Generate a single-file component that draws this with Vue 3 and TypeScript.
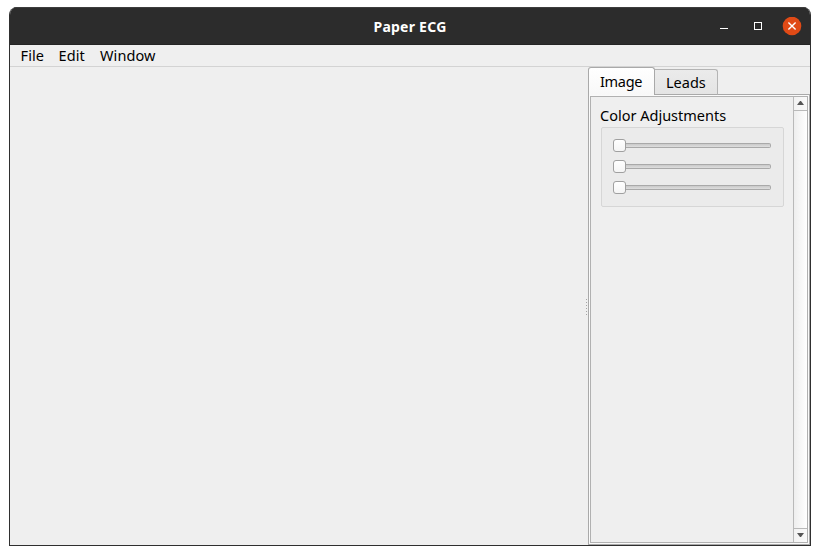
<script setup lang="ts">
import { ref } from 'vue'

const menus = ['File', 'Edit', 'Window']
const tabs = ['Image', 'Leads']
const active = ref('Image')
const sliders = ref([0, 0, 0])
</script>

<template>
  <div class="desktop">
    <div class="window">
      <header class="titlebar">
        <span class="title">Paper ECG</span>
        <div class="controls">
          <svg width="90" height="20" viewBox="0 0 90 20">
            <path d="M8 11.5h8" stroke="#fff" stroke-width="1" />
            <rect x="42.5" y="5.5" width="7" height="7" fill="none" stroke="#fff" />
            <circle cx="80" cy="9" r="9.3" fill="#e04a16" />
            <path d="M76.4 5.4l7.2 7.2M83.6 5.4l-7.2 7.2" stroke="#fff" stroke-width="1.4" />
          </svg>
        </div>
      </header>
      <nav class="menubar">
        <span v-for="m in menus" :key="m" :class="['menu', 'menu-' + m.toLowerCase()]">{{ m }}</span>
      </nav>
      <main class="body">
        <section class="canvas"></section>
        <div class="splitter"><i v-for="n in 6" :key="n"></i></div>
        <aside class="side">
          <div class="tabs">
            <div
              v-for="t in tabs"
              :key="t"
              :class="['tab', 'tab-' + t.toLowerCase(), { active: active === t }]"
              @click="active = t"
            ><span>{{ t }}</span></div>
            <div class="tabfill"></div>
          </div>
          <div class="pane">
            <div class="frame">
              <div class="content">
                <div class="heading"><span>Color Adjustments</span></div>
                <div class="group">
                  <div v-for="(v, i) in sliders" :key="i" class="slider">
                    <div class="handle"></div>
                    <div class="groove"></div>
                  </div>
                </div>
              </div>
              <div class="scrollbar">
                <div class="arrow up">
                  <svg width="7" height="4" viewBox="0 0 7 4"><path d="M0 4L3 0h1L7 4z" fill="#555" /></svg>
                </div>
                <div class="track"></div>
                <div class="arrow down">
                  <svg width="7" height="4" viewBox="0 0 7 4"><path d="M0 0L3 4h1L7 0z" fill="#555" /></svg>
                </div>
              </div>
            </div>
          </div>
        </aside>
      </main>
    </div>
  </div>
</template>

<style>
body { background: #fff; }
</style>

<style scoped>
* { box-sizing: border-box; }
.desktop {
  width: 820px;
  height: 555px;
  padding: 7px 9px 9px;
  background: #fff;
  font-family: "Noto Sans", "Open Sans", sans-serif;
  font-size: 14.5px;
  color: #000;
  overflow: hidden;
}
.window {
  width: 802px;
  height: 539px;
  display: flex;
  flex-direction: column;
  border: 1px solid #2f2f2f;
  border-top: 0;
  border-radius: 8px 8px 0 0;
  background: #efefef;
  overflow: hidden;
}
.titlebar {
  height: 38px;
  flex: none;
  display: grid;
  grid-template-columns: 1fr auto 1fr;
  align-items: center;
  padding-top: 2px;
  background: #2c2c2c;
  border-top: 1px solid #3d3d3d;
  border-bottom: 1px solid #242424;
  margin: 0 -1px;
  color: #fff;
}
.title {
  grid-column: 2;
  font-size: 14px;
  font-weight: 700;
  letter-spacing: 0.25px;
  line-height: 20px;
  white-space: nowrap;
}
.controls { justify-self: end; height: 20px; margin-right: 9px; }
.controls svg { display: block; }
.menubar {
  height: 22px;
  flex: none;
  display: flex;
  padding-left: 10px;
  line-height: 21px;
  letter-spacing: 0.1px;
  border-bottom: 1px solid #d3d3d3;
}
.menu { white-space: nowrap; }
.menu-file { width: 38px; padding-left: 0.5px; }
.menu-edit { width: 42px; padding-left: 0.5px; }
.body { flex: 1; display: flex; min-height: 0; }
.canvas { flex: 1; }
.splitter {
  width: 4px;
  padding-top: 1px;
  display: flex;
  flex-direction: column;
  align-items: center;
  justify-content: center;
  gap: 2px;
}
.splitter i { width: 1px; height: 1px; background: #a5a5a5; }
.side { width: 222px; display: flex; flex-direction: column; }
.tabs { height: 28px; flex: none; display: flex; align-items: flex-end; }
.tab {
  border: 1px solid #b4b4b4;
  border-radius: 3px 3px 0 0;
  white-space: nowrap;
}
.tab-image {
  width: 67px;
  height: 28px;
  padding-left: 11px;
  line-height: 26px;
  letter-spacing: -0.3px;
}
.tab.active {
  border-color: #a9a9a9;
  border-bottom: 0;
  background: linear-gradient(#fff, #fbfbfb 60%, #f8f8f8);
}
.tab-leads {
  width: 63px;
  height: 26px;
  border-left: 0;
  border-bottom-color: #a9a9a9;
  border-top-left-radius: 0;
  background: linear-gradient(#ebebeb, #e4e4e4);
  padding-left: 11px;
  line-height: 24px;
}
.tabfill { flex: 1; align-self: stretch; border-bottom: 1px solid #a9a9a9; }
.pane {
  flex: 1;
  min-height: 0;
  display: flex;
  border: 1px solid #a9a9a9;
  border-top: 0;
  padding: 1px;
  background: #fafafa;
}
.frame {
  flex: 1;
  display: flex;
  border: 1px solid #b1b1b1;
  background: #efefef;
}
.content { flex: 1; padding: 8px 9px 0 10px; }
.heading { height: 22px; line-height: 21px; margin-left: -1px; white-space: nowrap; }
.group {
  height: 80px;
  border: 1px solid #d6d6d6;
  border-radius: 2px;
  background: #ebebeb;
  padding: 11px 12px 0 11px;
  display: flex;
  flex-direction: column;
  gap: 8px;
}
.slider { height: 13px; display: flex; align-items: center; }
.handle {
  width: 13px;
  height: 13px;
  border: 1px solid #a0a0a0;
  border-radius: 3px;
  background: linear-gradient(#fff, #f5f5f5);
}
.groove {
  flex: 1;
  height: 5px;
  border: 1px solid #a9a9a9;
  border-left: 0;
  border-radius: 0 2px 2px 0;
  background: linear-gradient(#c9c9c9, #dedede);
}
.scrollbar {
  width: 14px;
  display: flex;
  flex-direction: column;
  border-left: 1px solid #b9b9b9;
}
.arrow {
  height: 14px;
  padding-bottom: 1px;
  display: flex;
  align-items: center;
  justify-content: center;
  background: linear-gradient(90deg, #f2f2f2, #fafafa);
}
.arrow svg { display: block; }
.up { border-bottom: 1px solid #b9b9b9; }
.down { border-top: 1px solid #b9b9b9; }
.track { flex: 1; background: linear-gradient(90deg, #eee, #fff); }
</style>
